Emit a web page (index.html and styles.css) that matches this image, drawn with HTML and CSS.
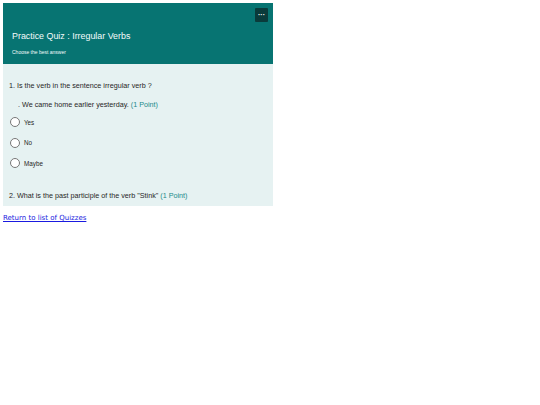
FILE: index.html
```html
<!DOCTYPE html>
<html>
<head>
<meta charset="utf-8">
<link rel="stylesheet" href="styles.css">
</head>
<body>
<div class="quiz">
  <div class="header">
    <div class="more">&middot;&middot;&middot;</div>
    <div class="title">Practice Quiz : Irregular Verbs</div>
    <div class="subtitle">Choose the best answer</div>
  </div>
  <div class="content">
    <div class="question">1. Is the verb in the sentence irregular verb ?</div>
    <div class="sentence">. We came home earlier yesterday. <span class="points">(1 Point)</span></div>
    <div class="options">
      <div class="option"><span class="radio"></span><span>Yes</span></div>
      <div class="option"><span class="radio"></span><span>No</span></div>
      <div class="option"><span class="radio"></span><span>Maybe</span></div>
    </div>
    <div class="question q2">2. What is the past participle of the verb "Stink" <span class="points">(1 Point)</span></div>
  </div>
</div>
<a class="back" href="#">Return to list of Quizzes</a>
</body>
</html>
```
FILE: styles.css
```css
body {
  margin: 3px;
  font-family: "Liberation Sans", Arial, sans-serif;
}
.quiz {
  width: 270px;
}
.header {
  background: #077472;
  height: 61px;
  position: relative;
  padding: 0 9px;
  box-sizing: border-box;
  color: #f4fbfb;
}
.more {
  position: absolute;
  right: 5px;
  top: 5px;
  width: 13px;
  height: 14px;
  background: #0a3b3b;
  border-radius: 1px;
  color: #fff;
  font-size: 7px;
  line-height: 13px;
  text-align: center;
  font-weight: bold;
}
.title {
  padding-top: 28px;
  font-size: 8.9px;
  line-height: 11px;
}
.subtitle {
  font-size: 5px;
  margin-top: 7px;
}
.content {
  background: #e6f2f2;
  padding: 17px 6px 5px 6px;
  color: #262626;
}
.question {
  font-size: 7.2px;
  line-height: 10px;
}
.sentence {
  font-size: 7.2px;
  line-height: 10px;
  margin-top: 9px;
  padding-left: 9px;
}
.points {
  color: #1c8a8a;
}
.options {
  display: flex;
  flex-direction: column;
  gap: 10.5px;
  margin-top: 7px;
  padding-left: 1px;
}
.option {
  display: flex;
  align-items: center;
  gap: 4px;
  font-size: 6.3px;
  height: 10px;
}
.radio {
  border: 0.8px solid #777;
  border-radius: 50%;
  background: #fff;
  box-sizing: border-box;
  width: 10px;
  height: 10px;
}
.q2 {
  margin-top: 23px;
}
.back {
  display: inline-block;
  margin-top: 6px;
  font-family: "DejaVu Sans", sans-serif;
  font-size: 7px;
  color: #1a1ae0;
}
```
